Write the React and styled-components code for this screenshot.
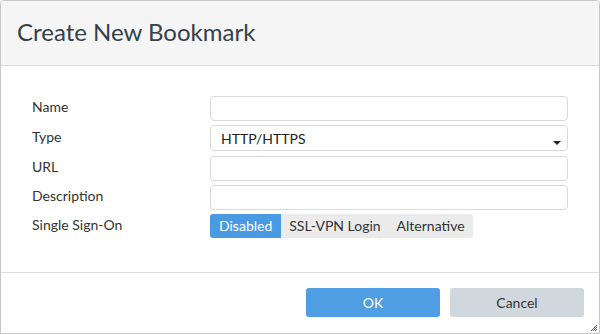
import React from "react";
import styled, { createGlobalStyle } from "styled-components";

const Global = createGlobalStyle`
  html, body { margin: 0; padding: 0; background: #fff; }
  body { font-family: Lato, "Open Sans", sans-serif; }
  * { box-sizing: border-box; }
`;

const Dialog = styled.div`
  position: relative;
  width: 600px;
  height: 334px;
  border: 1px solid #c8c8c8;
  border-radius: 4px 4px 0 0;
  display: flex;
  flex-direction: column;
  background: #fff;
  overflow: hidden;
`;

const Header = styled.div`
  height: 65px;
  flex: none;
  background: #f5f5f5;
  border-bottom: 1px solid #dcdcdc;
  display: flex;
  align-items: center;
  padding-left: 16px;
`;

const Title = styled.h1`
  margin: 0;
  font-family: Lato, sans-serif;
  font-weight: 400;
  font-size: 24px;
  color: #34404c;
  line-height: 1;
  position: relative;
  top: -1px;
`;

const Body = styled.div`
  flex: 1;
  padding: 30px 30px 0 31px;
  border-bottom: 1px solid #dcdcdc;
  display: grid;
  grid-template-columns: 178px 358px;
  align-content: start;
  row-gap: 4px;
`;

const Label = styled.div`
  font-size: 14px;
  color: #333;
  display: flex;
  align-items: center;
  height: ${(p) => p.$h || 25}px;
  margin-bottom: ${(p) => p.$mb || 0}px;
  position: relative;
  top: -2px;
`;

const Field = styled.div`
  height: ${(p) => p.$h || 25}px;
  margin-bottom: ${(p) => p.$mb || 0}px;
  border: 1px solid #d9d9d9;
  border-radius: 4px;
  background: #fff;
  position: relative;
  display: flex;
  align-items: center;
  padding-left: 10px;
  font-size: 14px;
  color: #222;
`;

const Caret = styled.span`
  position: absolute;
  right: 6px;
  top: 15px;
  width: 0;
  height: 0;
  border-left: 4px solid transparent;
  border-right: 4px solid transparent;
  border-top: 4px solid #222;
`;

const Segmented = styled.div`
  display: flex;
  height: 24px;
  justify-self: start;
  background: #ebebeb;
  border-radius: 3px;
  overflow: hidden;
`;

const Segment = styled.div`
  display: flex;
  align-items: center;
  padding: 0 ${(p) => p.$px || 9}px 2px;
  font-size: 14px;
  color: ${(p) => (p.$active ? "#fff" : "#333")};
  background: ${(p) => (p.$active ? "#4a9ae1" : "transparent")};
`;

const Footer = styled.div`
  height: 60px;
  flex: none;
  display: flex;
  justify-content: flex-end;
  align-items: flex-start;
  padding: 15px 15px 0 0;
  gap: 10px;
`;

const Button = styled.div`
  width: 134px;
  height: 29px;
  border-radius: 3px;
  display: flex;
  align-items: center;
  justify-content: center;
  font-size: 14px;
  background: ${(p) => (p.$primary ? "#4f9de3" : "#d1d8dd")};
  color: ${(p) => (p.$primary ? "#fff" : "#333")};
`;

const Grip = styled.svg`
  position: absolute;
  right: 1px;
  bottom: 1px;
`;

export default function App() {
  return (
    <>
      <Global />
      <Dialog>
        <Header>
          <Title>Create New Bookmark</Title>
        </Header>
        <Body>
          <Label>Name</Label>
          <Field />
          <Label $h={26} $mb={1}>Type</Label>
          <Field $h={26} $mb={1}>
            HTTP/HTTPS
            <Caret />
          </Field>
          <Label>URL</Label>
          <Field />
          <Label>Description</Label>
          <Field />
          <Label $h={24}>Single Sign-On</Label>
          <Segmented>
            <Segment $active>Disabled</Segment>
            <Segment $px={8}>SSL-VPN Login</Segment>
            <Segment $px={8}>Alternative</Segment>
          </Segmented>
        </Body>
        <Footer>
          <Button $primary>OK</Button>
          <Button>Cancel</Button>
        </Footer>
        <Grip width="8" height="8" viewBox="0 0 8 8">
          <path d="M7 1L1 7M7 3L3 7M7 5L5 7" stroke="#555" strokeWidth="1" />
        </Grip>
      </Dialog>
    </>
  );
}
